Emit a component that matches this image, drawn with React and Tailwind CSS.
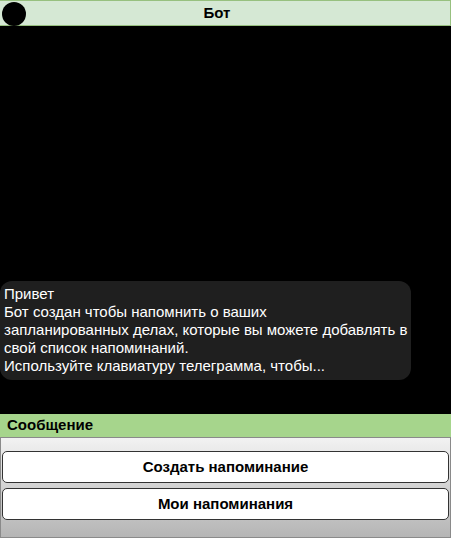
export default function App() {
  return (
    <div className="w-[451px] h-[541px] flex flex-col bg-black font-['Liberation_Sans',Arial,sans-serif]">
      <div className="h-[26px] flex items-center relative bg-[#d5e8d4] border-t border-b border-r border-[#97c07f]">
        <div className="absolute left-[2px] top-[1px] w-[24px] h-[24px] rounded-full bg-black" />
        <p className="flex-1 text-center text-[15px] font-bold text-black pr-[16px]">Бот</p>
      </div>
      <div className="flex-1 flex flex-col justify-end pb-[34px]">
        <div className="w-[411px] bg-[#1f1f1f] rounded-[12px] pl-[4px] pt-[4px] pb-[5px] text-white text-[15px] leading-[18px]">
          <p>Привет</p>
          <p>Бот создан чтобы напомнить о ваших</p>
          <p>запланированных делах, которые вы можете добавлять в</p>
          <p>свой список напоминаний.</p>
          <p>Используйте клавиатуру телеграмма, чтобы...</p>
        </div>
      </div>
      <div className="h-[24px] flex items-center bg-[#a6d58c] border-b border-[#8a8a8a] px-[7px]">
        <p className="text-[15px] font-bold text-black">Сообщение</p>
      </div>
      <div className="h-[100px] flex flex-col gap-[5px] pt-[13px] px-[1px] bg-gradient-to-b from-[#f2f2f2] to-[#b5b5b5] border-l border-r border-b border-[#8a8a8a]">
        <button className="h-[32px] bg-white border border-[#333] rounded-[5px] text-[15px] font-bold text-black">
          Создать напоминание
        </button>
        <button className="h-[32px] bg-white border border-[#333] rounded-[5px] text-[15px] font-bold text-black">
          Мои напоминания
        </button>
      </div>
      <div className="h-[3px] bg-white" />
    </div>
  )
}
